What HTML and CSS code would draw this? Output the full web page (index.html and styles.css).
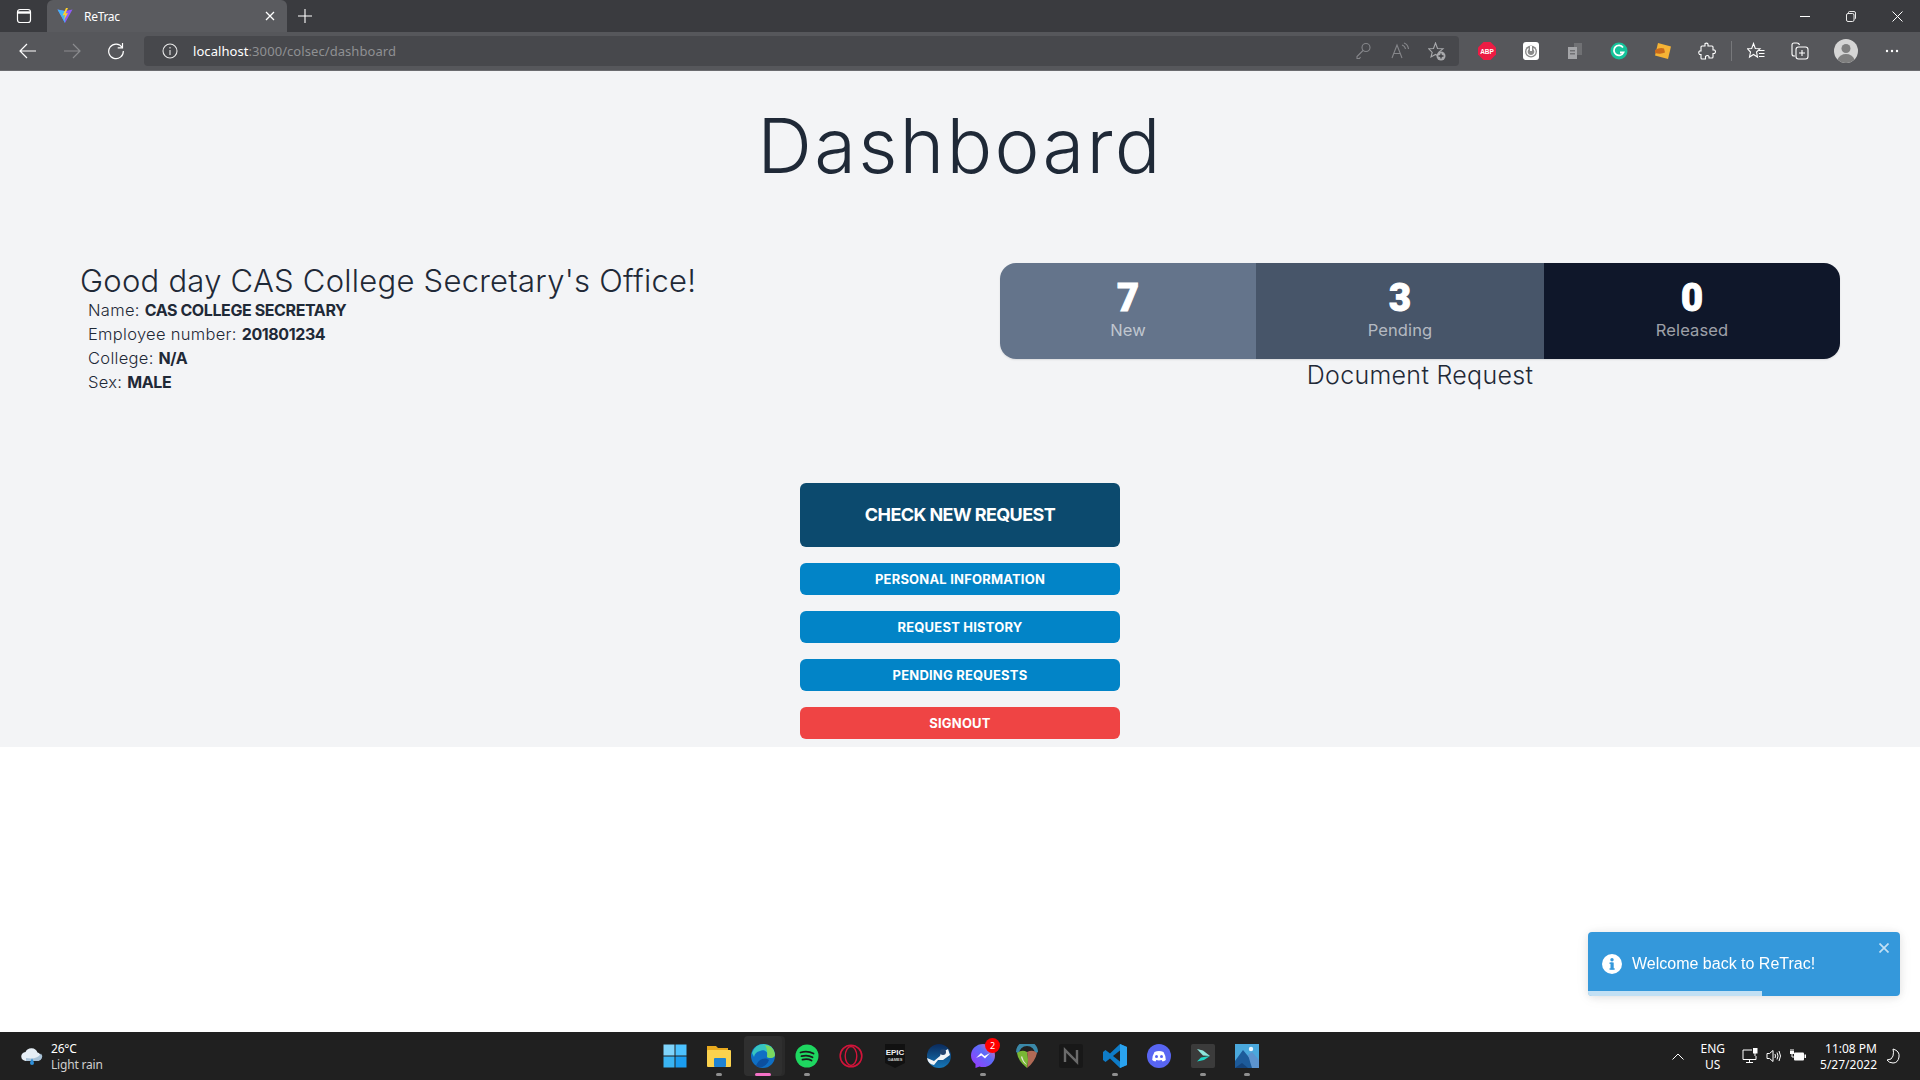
FILE: index.html
```html
<!DOCTYPE html>
<html lang="en">
<head>
<meta charset="utf-8">
<title>ReTrac</title>
<link rel="stylesheet" href="styles.css">
</head>
<body>
<header class="chrome">
  <div class="tabstrip">
    <span class="slot-tabs"><svg width="16" height="16" viewBox="0 0 16 16" fill="none" stroke="#fff" stroke-width="1.2"><rect x="1.5" y="1.5" width="13" height="13" rx="2.5"/><path d="M1.5 4.5h13" stroke-width="2.4"/></svg></span>
    <div class="tab">
      <svg class="favicon" width="16" height="16" viewBox="0 0 16 16"><path d="M0.5 1.5 8 15 15.5 1.5 8 3z" fill="#8f5cf6"/><path d="M0.5 1.5 8 15 8 3z" fill="#42b4f5"/><path d="M9 0 5.5 7.5 8 7 7 12 11 5 8.5 5.5 11 0z" fill="#ffd02b"/></svg>
      <span class="tab-title">ReTrac</span>
      <svg class="tab-close" width="10" height="10" viewBox="0 0 10 10" stroke="#fff" stroke-width="1.3"><path d="M1 1l8 8M9 1l-8 8"/></svg>
    </div>
    <span class="slot-plus"><svg width="14" height="14" viewBox="0 0 14 14" stroke="#fff" stroke-width="1.1"><path d="M7 0v14M0 7h14"/></svg></span>
    <div class="winctl">
      <span class="ctl"><svg width="10" height="10" viewBox="0 0 10 10" stroke="#fff"><path d="M0 5.5h10"/></svg></span>
      <span class="ctl"><svg width="10" height="11" viewBox="0 0 10 11" fill="none" stroke="#fff" stroke-width="0.9"><rect x="0.5" y="2.5" width="7.5" height="8" rx="1.5"/><path d="M2.5 2V1.5q0-1 1-1H8q1.5 0 1.5 1.5v5q0 1-.8 1"/></svg></span>
      <span class="ctl"><svg width="11" height="11" viewBox="0 0 11 11" stroke="#fff" stroke-width="1"><path d="M.5.5l10 10M10.5.5l-10 10"/></svg></span>
    </div>
  </div>
  <div class="toolbar">
    <span class="tool tool-first"><svg width="18" height="16" viewBox="0 0 18 16" fill="none" stroke="#fff" stroke-width="1.2"><path d="M17 8H1M8 1 1 8l7 7"/></svg></span>
    <span class="tool"><svg width="18" height="16" viewBox="0 0 18 16" fill="none" stroke="#8b8c8f" stroke-width="1.2"><path d="M1 8h16M10 1l7 7-7 7"/></svg></span>
    <span class="tool"><svg width="18" height="18" viewBox="0 0 18 18" fill="none" stroke="#fff" stroke-width="1.2"><path d="M15.2 5.5A7.3 7.3 0 1 0 16.3 9"/><path d="M15.5 1v4.8h-4.800"/></svg></span>
    <div class="addr">
      <svg class="addr-info" width="16" height="16" viewBox="0 0 16 16" fill="none" stroke="#e8e8e8" stroke-width="1.1"><circle cx="8" cy="8" r="7"/><path d="M8 7v5M8 4v1.400"/></svg>
      <span class="url"><span class="url-host">localhost</span>:3000/colsec/dashboard</span>
      <span class="addr-tools">
        <span class="atool"><svg width="16" height="18" viewBox="0 0 16 18" fill="none" stroke="#85868a" stroke-width="1.1"><circle cx="11" cy="5.500" r="4"/><path d="M8 8.500 2 14.500v2h2.500l1-1.500M11.500 4.500h.1"/></svg></span>
        <span class="atool"><svg width="18" height="18" viewBox="0 0 18 18" fill="none" stroke="#85868a" stroke-width="1.1"><path d="M1 16 6 3l5 13M2.800 11.500h6.400M11 3q3 1 3.500 4M13 1q4 1.500 4.500 6"/></svg></span>
        <span class="atool"><svg width="18" height="19" viewBox="0 0 18 19" fill="none" stroke="#a8a9ac" stroke-width="1.100"><path d="M7.500 1 9.500 6.500 15 6.800 10.800 10.300 12 15 7.500 12.500 3 15 4.200 10.300 0.800 6.800 5.500 6.500z"/><circle cx="13" cy="14" r="4.500" fill="#a8a9ac" stroke="none"/><path d="M13 11.500v5M10.500 14h5" stroke="#3c3d40" stroke-width="1.300"/></svg></span>
      </span>
    </div>
    <div class="exts">
      <span class="ext"><svg width="18" height="18" viewBox="0 0 18 18"><path d="M5.500 0h7L18 5.500v7L12.500 18h-7L0 12.500v-7z" fill="#ec1c44"/><text x="9" y="11.700" text-anchor="middle" class="abp">ABP</text></svg></span>
      <span class="ext"><svg width="16" height="18" viewBox="0 0 16 18"><rect width="16" height="18" rx="3" fill="#fff"/><circle cx="8" cy="9.500" r="6" fill="#8a8a8a"/><path d="M8 4v5" stroke="#fff" stroke-width="2"/><path d="M5.500 6.500a4 4 0 1 0 5 0" fill="none" stroke="#fff" stroke-width="1.300"/></svg></span>
      <span class="ext"><svg width="16" height="18" viewBox="0 0 16 18"><rect x="7" y="1" width="8" height="12" fill="#707174"/><rect x="1" y="5" width="9" height="12" fill="#a4a5a8"/><rect x="3" y="8" width="5" height="1.500" fill="#707174"/><rect x="3" y="11" width="5" height="1.500" fill="#707174"/></svg></span>
      <span class="ext"><svg width="18" height="18" viewBox="0 0 18 18"><circle cx="9" cy="9" r="8.500" fill="#15c39a"/><path d="M13 5.500A5 5 0 1 0 13.500 10.500H10" fill="none" stroke="#fff" stroke-width="1.800"/></svg></span>
      <span class="ext"><svg width="18" height="18" viewBox="0 0 18 18"><path d="M4 1 17 4.500 14 17 1 13.500z" fill="#f5b335"/><path d="M1 8q5-3 9-1.500l1 4q-4 2-10 .5z" fill="#c96a1b"/></svg></span>
      <span class="ext ext-puzzle"><svg width="18" height="18" viewBox="0 0 18 18" fill="none" stroke="#fff" stroke-width="1.100"><path d="M7 1.500q2-1 3 .5v2h4q1 0 1 1v3h1.500q2 1.500 0 3.500H15v3.500q0 1-1 1h-3v-1.500q-1.500-2-3.500 0V17H4q-1 0-1-1v-3.500H1.500q-1.500-2 0-3.500H3V5q0-1 1-1h3z"/></svg></span>
      <span class="ext-div"></span>
      <span class="ext"><svg width="18" height="18" viewBox="0 0 18 18" fill="none" stroke="#fff" stroke-width="1.100"><path d="M6.500 1.500 8.300 6.500 13 6.800 9.500 10 10.500 15 6.500 12.500 2.500 15 3.500 10 .5 6.800 4.700 6.500z"/><path d="M11.500 8.500H17.500M12 11.500h5.500M12 14.500h5.500"/></svg></span>
      <span class="ext"><svg width="18" height="18" viewBox="0 0 18 18" fill="none" stroke="#fff" stroke-width="1.100"><path d="M4 14H3q-2 0-2-2V3q0-2 2-2h3q2 0 2.500 2"/><rect x="5" y="5" width="12" height="12" rx="2.500"/><path d="M11 8v6M8 11h6"/></svg></span>
      <span class="ext ext-avatar"><svg width="24" height="24" viewBox="0 0 24 24"><circle cx="12" cy="12" r="12" fill="#d5d5d5"/><circle cx="12" cy="9.500" r="4.500" fill="#7f7f7f"/><path d="M3.500 20.500q2.500-5.500 8.500-5.500t8.500 5.500A12 12 0 0 1 3.500 20.500z" fill="#7f7f7f"/></svg></span>
      <span class="ext"><svg width="14" height="4" viewBox="0 0 14 4" fill="#fff"><circle cx="2" cy="2" r="1.200"/><circle cx="7" cy="2" r="1.200"/><circle cx="12" cy="2" r="1.200"/></svg></span>
    </div>
  </div>
</header>

<main class="page">
  <h1 class="title">Dashboard</h1>
  <section class="summary">
    <div class="profile">
      <h2 class="greeting">Good day CAS College Secretary's Office!</h2>
      <ul class="details">
        <li>Name: <b>CAS COLLEGE SECRETARY</b></li>
        <li>Employee number: <b>201801234</b></li>
        <li>College: <b>N/A</b></li>
        <li>Sex: <b>MALE</b></li>
      </ul>
    </div>
    <div class="requests">
      <div class="stats">
        <div class="stat stat-new"><div class="stat-num">7</div><div class="stat-label">New</div></div>
        <div class="stat stat-pending"><div class="stat-num">3</div><div class="stat-label">Pending</div></div>
        <div class="stat stat-released"><div class="stat-num">0</div><div class="stat-label">Released</div></div>
      </div>
      <p class="stats-caption">Document Request</p>
    </div>
  </section>
  <nav class="actions">
    <button class="btn btn-main">CHECK NEW REQUEST</button>
    <button class="btn btn-blue">PERSONAL INFORMATION</button>
    <button class="btn btn-blue">REQUEST HISTORY</button>
    <button class="btn btn-blue">PENDING REQUESTS</button>
    <button class="btn btn-red">SIGNOUT</button>
  </nav>
</main>
<div class="rest"></div>

<footer class="taskbar">
  <div class="weather">
    <svg width="24" height="20" viewBox="0 0 24 20"><path d="M6 15a4.500 4.500 0 0 1-.5-9A6.500 6.500 0 0 1 17.500 6.500 4.500 4.500 0 0 1 18 15z" fill="#e6eef5"/><path d="M6 15h12a4.500 4.500 0 0 0 3-7.500Q17 14 6 12z" fill="#a9c3d8"/><path d="M12 12.500q2 3 2 4.500a2 2 0 0 1-4 0q0-1.500 2-4.500z" fill="#2f8fd8"/></svg>
    <div class="weather-text"><span class="wt-temp">26°C</span><span class="wt-desc">Light rain</span></div>
  </div>
  <div class="apps">
    <span class="app"><svg width="24" height="24" viewBox="0 0 24 24"><rect x="0.500" y="0.500" width="11" height="11" fill="#7fd4fb"/><rect x="12.500" y="0.500" width="11" height="11" fill="#4cc2ff"/><rect x="0.500" y="12.500" width="11" height="11" fill="#3ab4f2"/><rect x="12.500" y="12.500" width="11" height="11" fill="#1a9df0"/></svg></span>
    <span class="app app-run"><svg width="24" height="22" viewBox="0 0 24 22"><path d="M0 1h9l2 2h10v6H0z" fill="#e8a91e"/><rect y="5" width="24" height="17" rx="1" fill="#fbd24e"/><rect x="7" y="13" width="12" height="9" rx="1" fill="#1e82d2"/></svg></span>
    <span class="app app-active"><svg width="24" height="24" viewBox="0 0 24 24"><circle cx="12" cy="12" r="12" fill="#0f6fc4"/><path d="M1 9Q4 0 13 0q9 0 11 10c0 4-6 5-8 3 2-5-3-8-7-6Q4 8 3 13z" fill="#36c5c0"/><path d="M14 1q9 1 10 10c0 3-5 4-8 2q1-7-2-12z" fill="#7bd95f"/><path d="M5 22c3-8 10-9 13-6-2 6-8 9-13 6z" fill="#0c4f9e"/></svg></span>
    <span class="app app-run"><svg width="24" height="24" viewBox="0 0 24 24"><circle cx="12" cy="12" r="11.500" fill="#1ed760"/><path d="M5.500 8.500q7-2 13 1M6.500 12.200q6-1.700 11 1M7.500 15.700q5-1.300 9 .8" fill="none" stroke="#1a1a1a" stroke-width="1.800" stroke-linecap="round"/></svg></span>
    <span class="app"><svg width="24" height="24" viewBox="0 0 24 24" fill="none" stroke="#d2143a"><circle cx="12" cy="12" r="10.800" stroke-width="1.600"/><ellipse cx="12" cy="12" rx="5.800" ry="9.500" stroke-width="1.400"/></svg></span>
    <span class="app"><svg width="20" height="24" viewBox="0 0 20 24"><path d="M0 0h20v19l-10 5-10-5z" fill="#111"/><text x="10" y="11" text-anchor="middle" class="epic-a">EPIC</text><text x="10" y="16.500" text-anchor="middle" class="epic-b">GAMES</text></svg></span>
    <span class="app"><svg width="24" height="24" viewBox="0 0 24 24"><defs><linearGradient id="sg" x1="0" y1="0" x2="0" y2="1"><stop offset="0" stop-color="#0b2a5b"/><stop offset="1" stop-color="#1577b8"/></linearGradient></defs><circle cx="12" cy="12" r="12" fill="url(#sg)"/><path d="M0 14l7 3 6-5 1-3 7-4 2 6-7 5-5 0-4 5q-6-1-7-7z" fill="#f2f4f7"/><circle cx="16" cy="8" r="3" fill="#25446f"/></svg></span>
    <span class="app app-run"><svg width="24" height="24" viewBox="0 0 24 24"><defs><linearGradient id="mg" x1="0" y1="1" x2="1" y2="0"><stop offset="0" stop-color="#a033ff"/><stop offset=".6" stop-color="#5b6cf8"/><stop offset="1" stop-color="#ff6b9c"/></linearGradient></defs><path d="M12 0a12 11.500 0 0 1 0 23q-2 0-3.500-.5L4.500 24v-4Q0 17 0 11.500A12 11.500 0 0 1 12 0z" fill="url(#mg)"/><path d="M5 14l5-5 3.500 3L19 9l-5 5.500-3.500-3z" fill="#fff"/></svg><span class="badge">2</span></span>
    <span class="app"><svg width="22" height="24" viewBox="0 0 22 24"><path d="M0 8a11 11 0 0 1 22 0l-3 2A8 8 0 0 0 3 10z" fill="#3a88a8"/><path d="M1 9q5-4 10-1 2 8 0 16Q2 17 1 9z" fill="#79b834"/><path d="M11 8q6-3 10 1-2 9-10 15 2-8 0-16z" fill="#b06a55"/><path d="M6 12q1 5 5 9-5-3-6-8z" fill="#e6e6d8"/></svg></span>
    <span class="app"><svg width="24" height="24" viewBox="0 0 24 24"><rect width="24" height="24" rx="2" fill="#181818"/><path d="M6 18V6l12 12V6" fill="none" stroke="#6a6a6a" stroke-width="2.400"/></svg></span>
    <span class="app app-run"><svg width="24" height="24" viewBox="0 0 24 24"><path d="M17 0 24 3v18l-7 3-10-9.500-4.500 3.500L0 16V8l2.500-2 4.500 3.500z" fill="#0e7cc8"/><path d="M17 0l7 3v18l-7 3z" fill="#2aa3ef"/><path d="M17 6.500v11L10 12z" fill="#202020"/></svg></span>
    <span class="app"><svg width="24" height="24" viewBox="0 0 24 24"><circle cx="12" cy="12" r="12" fill="#5865f2"/><path d="M7.500 8q4.500-2 9 0 2 3 2.300 8-1.500 1.200-3.300 1.500l-.8-1.500q-2.700.8-5.400 0l-.8 1.500Q6.700 17.200 5.200 16q.3-5 2.300-8z" fill="#fff"/><circle cx="9.500" cy="12.500" r="1.500" fill="#5865f2"/><circle cx="14.500" cy="12.500" r="1.500" fill="#5865f2"/></svg></span>
    <span class="app app-run"><svg width="24" height="24" viewBox="0 0 24 24"><rect width="24" height="24" rx="2" fill="#3b3b3b"/><path d="M6 5l6 1.500 7 5.500-7-.5z" fill="#8ee6dc"/><path d="M19 12l-9 1.500-4 4 7-1.500z" fill="#1fd6c6"/></svg></span>
    <span class="app app-run"><svg width="24" height="24" viewBox="0 0 24 24"><rect width="24" height="24" fill="#4aa8dc"/><path d="M0 24V17L8 6l9 11 7 7z" fill="#1d5b9a"/><path d="M13 11l4-3 7 8v8h-7z" fill="#5d94cf"/><path d="M0 24l7-5 6 5z" fill="#14447c"/><circle cx="16" cy="5" r="2.200" fill="#e8f6ff"/></svg></span>
  </div>
  <div class="tray">
    <svg class="tray-chev" width="12" height="7" viewBox="0 0 12 7" fill="none" stroke="#fff" stroke-width="1"><path d="M.5 6.500 6 1l5.500 5.500"/></svg>
    <div class="lang"><span>ENG</span><span>US</span></div>
    <div class="tray-icons">
      <svg width="16" height="16" viewBox="0 0 16 16" fill="none" stroke="#fff"><path d="M10 2H1v9.500h13V8M7.500 11.500V14M4 14.500h7"/><rect x="11.500" y=".5" width="3.500" height="4.500" fill="#fff"/><path d="M13 5v3"/></svg>
      <svg width="16" height="16" viewBox="0 0 16 16" fill="none" stroke="#fff"><path d="M1 5.500h2.500L7 2.500v11L3.500 10.500H1zM9 6q1 2 0 4M11 4.500q2 3.500 0 7M13 3q3 5 0 10"/></svg>
      <svg width="16" height="16" viewBox="0 0 16 16"><rect x="4" y="4.500" width="10" height="8" rx="1" fill="#fff"/><rect x="14.500" y="6.500" width="1.500" height="3.500" fill="#fff"/><rect x="0" y="3" width="4" height="3" fill="#fff"/><path d="M1 1v2M3 1v2M2 6v3h3" stroke="#fff" fill="none"/></svg>
    </div>
    <div class="clock"><span>11:08 PM</span><span>5/27/2022</span></div>
    <svg class="tray-moon" width="14" height="16" viewBox="0 0 14 16" fill="none" stroke="#fff"><path d="M7 1q7 2 6 8-1 6-6 6-4 0-6-3 5 0 6-4t0-7z"/></svg>
  </div>
</footer>

<aside class="toast">
  <svg class="toast-icon" width="20" height="20" viewBox="0 0 20 20"><circle cx="10" cy="10" r="10" fill="#fff"/><rect x="8.500" y="8.500" width="3.200" height="7" fill="#3498db"/><rect x="7.500" y="8.500" width="3" height="1.400" fill="#3498db"/><rect x="7.500" y="14.300" width="5.200" height="1.400" fill="#3498db"/><circle cx="10" cy="5.800" r="1.700" fill="#3498db"/></svg>
  <span class="toast-text">Welcome back to ReTrac!</span>
  <svg class="toast-close" width="10" height="10" viewBox="0 0 10 10" stroke="#fff" stroke-width="1.700"><path d="M.5.500l9 9M9.500.500l-9 9"/></svg>
  <span class="toast-bar"></span>
</aside>
</body>
</html>
```
FILE: styles.css
```css
* { box-sizing: border-box; }
html, body { margin: 0; padding: 0; }
body {
  height: 100vh;
  display: flex;
  flex-direction: column;
  overflow: hidden;
  background: #fff;
  font-family: Inter, "Noto Sans", sans-serif;
  color: #1f2937;
}
svg { display: block; flex: none; }

/* browser chrome */
.chrome { flex: none; font-family: "Noto Sans", "Open Sans", sans-serif; }
.tabstrip { height: 32px; background: #3a3b3f; display: flex; align-items: center; }
.slot-tabs { width: 47px; padding-left: 16px; }
.tab {
  width: 240px; height: 32px; background: #5a5b5f; border-radius: 6px 6px 0 0;
  display: flex; align-items: center; padding: 0 12px 0 10px; color: #fff; font-size: 12px;
}
.tab-title { margin-left: 11px; flex: 1; letter-spacing: -.3px; }
.slot-plus { margin-left: 11px; }
.winctl { margin-left: auto; display: flex; }
.ctl { width: 46px; height: 32px; display: flex; align-items: center; justify-content: center; }
.toolbar {
  height: 39px; background: #56575b; display: flex; align-items: center;
  border-bottom: 1px solid #6a6b6f;
}
.tool { width: 44px; display: flex; justify-content: center; }
.tool-first { margin-left: 6px; }
.addr {
  width: 1315px; height: 30px; margin-left: 6px; background: #47484c; border-radius: 4px;
  display: flex; align-items: center; padding-left: 18px; font-size: 13px; color: #8f9093;
}
.url { margin-left: 15px; flex: 1; letter-spacing: .07px; }
.url-host { color: #fff; }
.addr-tools { display: flex; margin-right: 4px; }
.atool { width: 37px; display: flex; justify-content: center; }
.exts { display: flex; align-items: center; margin-left: 6px; }
.ext { width: 44px; display: flex; justify-content: center; }
.ext-div { width: 1px; height: 20px; background: #77787b; margin: 0 2px 0 2px; }
.ext-avatar { width: 48px; }
.abp { font-family: "Liberation Sans", sans-serif; font-size: 6.500px; font-weight: 700; fill: #fff; }
.epic-a { font-family: "Liberation Sans", sans-serif; font-size: 8px; font-weight: 700; fill: #f0f0f0; }
.epic-b { font-family: "Liberation Sans", sans-serif; font-size: 4px; font-weight: 700; fill: #ccc; }

/* page */
.page { flex: none; height: 676px; background: #f3f4f6; }
.title {
  margin: 0; padding-top: 26px; height: 192px; text-align: center;
  font-size: 76px; line-height: 96px; font-weight: 350; letter-spacing: 2.200px; color: #1f2937;
}
.summary { display: flex; justify-content: space-between; padding: 0 80px; height: 220px; }
.greeting { margin: 0; font-size: 31px; line-height: 36px; font-weight: 300; letter-spacing: .25px; color: #1f2937; }
.details {
  list-style: none; margin: -1px 0 0; padding: 0 0 0 8px;
  font-size: 16.500px; line-height: 24px; font-weight: 300; letter-spacing: .3px;
}
.details b { font-size: 16px; font-weight: 700; letter-spacing: -.4px; }
.requests { width: 840px; }
.stats { display: flex; border-radius: 16px; overflow: hidden; box-shadow: 0 1px 2px rgba(0,0,0,.1); }
.stat { padding: 16px 0 17px; text-align: center; }
.stat-new { width: 256px; background: #64748b; }
.stat-pending { width: 288px; background: #475569; }
.stat-released { width: 296px; background: #0f172a; }
.stat-num { font-family: Roboto, sans-serif; font-size: 38px; line-height: 39px; font-weight: 900; color: #fff; -webkit-text-stroke: 1px #fff; }
.stat-label { font-size: 16.500px; line-height: 24px; font-weight: 400; letter-spacing: .1px; color: rgba(255,255,255,.6); }
.stats-caption { margin: 0; text-align: center; font-size: 25px; line-height: 32px; font-weight: 300; letter-spacing: .3px; color: #1f2937; }
.actions { width: 320px; margin: 0 auto; display: flex; flex-direction: column; gap: 16px; }
.btn {
  display: block; width: 100%; height: 32px; border: 0; padding: 0; border-radius: 6px; color: #fff;
  font-family: Inter, sans-serif; font-size: 13px; font-weight: 700; letter-spacing: .2px;
}
.btn-main { height: 64px; padding-bottom: 2px; background: #0c4a6e; font-size: 18px; letter-spacing: -.6px; }
.btn-blue { background: #0284c7; }
.btn-red { background: #ef4444; }
.rest { flex: 1; }

/* taskbar */
.taskbar {
  flex: none; height: 48px; background: #202020; color: #fff; position: relative;
  display: grid; grid-template-columns: 1fr auto 1fr; align-items: center;
  font-family: "Noto Sans", "Open Sans", sans-serif; font-size: 12px;
}
.weather { display: flex; align-items: center; padding-left: 20px; gap: 7px; }
.weather-text { display: flex; flex-direction: column; line-height: 16px; margin-top: 2px; letter-spacing: -.2px; }
.wt-desc { color: #cfcfcf; }
.apps { display: flex; padding-left: 2px; }
.app { width: 44px; height: 48px; display: flex; align-items: center; justify-content: center; position: relative; }
.app-run::after {
  content: ""; position: absolute; left: 19px; bottom: 4px; width: 6px; height: 3px; border-radius: 2px; background: #8f8f8f;
}
.app-active::before {
  content: ""; position: absolute; left: 3px; top: 4px; width: 38px; height: 40px; border-radius: 4px; background: #2f2f2f; box-shadow: 3px 0 0 #2a2a2a;
}
.app-active svg { position: relative; }
.app-active::after {
  content: ""; position: absolute; left: 14px; bottom: 4px; width: 16px; height: 3px; border-radius: 2px; background: #f472c6;
}
.badge {
  position: absolute; left: 24px; top: 6px; width: 15px; height: 15px; border-radius: 50%;
  background: #f00; color: #fff; font-size: 9px; line-height: 15px; text-align: center;
}
.tray { display: flex; align-items: center; justify-content: flex-end; }
.tray-chev { margin-right: 16px; }
.lang { display: flex; flex-direction: column; align-items: center; line-height: 16px; margin: 2px 17px 0 0; }
.tray-icons { display: flex; gap: 8px; margin-right: 14px; }
.clock { display: flex; flex-direction: column; align-items: flex-end; line-height: 16px; margin: 2px 9px 0 0; }
.tray-moon { margin-right: 20px; }

/* toast */
.toast {
  position: fixed; left: 1588px; top: 932px; width: 312px; height: 64px;
  background: #3498db; border-radius: 4px; overflow: hidden;
  box-shadow: 0 1px 10px rgba(0,0,0,.1), 0 2px 15px rgba(0,0,0,.05);
  display: flex; align-items: center; padding: 0 0 1px 14px; color: #fff;
  font-family: "Liberation Sans", Arial, sans-serif; font-size: 16px;
}
.toast-text { margin-left: 10px; }
.toast-close { position: absolute; right: 11px; top: 11px; opacity: .7; }
.toast-bar { position: absolute; left: 0; bottom: 0; width: 174px; height: 5px; background: rgba(255,255,255,.7); }
```
